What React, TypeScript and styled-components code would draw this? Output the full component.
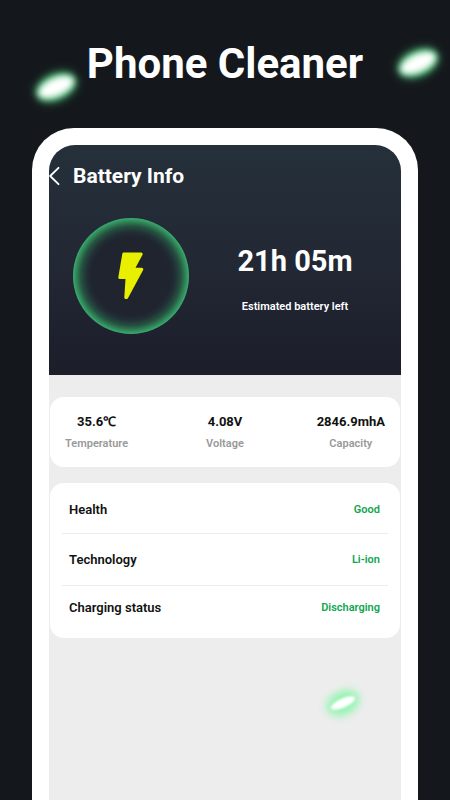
import React from "react";
import styled, { createGlobalStyle } from "styled-components";

const GlobalStyle = createGlobalStyle`
  *, *::before, *::after { box-sizing: border-box; }
  body {
    margin: 0;
    background: #14181c;
    font-family: Roboto, "Liberation Sans", sans-serif;
  }
  h1, h2, p, dl, dd { margin: 0; }
`;

const Page = styled.div`
  position: relative;
  display: flex;
  flex-direction: column;
  min-height: 100vh;
  overflow: hidden;
  background: #14181c;
`;

const PageHeader = styled.header`
  display: flex;
  align-items: center;
  justify-content: center;
  height: 128px;
  color: #fff;
`;

const PageTitle = styled.h1`
  font-size: 42px;
  line-height: 48px;
  font-weight: 700;
`;

const Phone = styled.main`
  flex: 1;
  display: flex;
  margin: 0 32px;
  padding: 17px 17px 0;
  border-radius: 42px 42px 0 0;
  background: #fff;
`;

const Screen = styled.div`
  flex: 1;
  min-width: 0;
  border-radius: 26px 26px 0 0;
  overflow: hidden;
  background: #ededed;
`;

const Hero = styled.section`
  height: 230px;
  padding-top: 18px;
  color: #fff;
  background: linear-gradient(#25303a, #222834 50%, #1c1e2a);
`;

const TopBar = styled.div`
  display: flex;
  align-items: center;
  gap: 12px;
  height: 26px;
`;

const BackButton = styled.button`
  display: flex;
  padding: 0;
  border: 0;
  background: none;
  color: #fff;
`;

const ScreenTitle = styled.h2`
  font-size: 21px;
  line-height: 26px;
  font-weight: 700;
`;

const HeroBody = styled.div`
  display: flex;
  align-items: center;
  padding: 29px 0 0 24px;
`;

const Gauge = styled.div`
  flex: none;
  display: flex;
  align-items: center;
  justify-content: center;
  width: 116px;
  height: 116px;
  border-radius: 50%;
  background: radial-gradient(
    closest-side,
    #20242f 68%,
    #212f36 76%,
    #26513f 86%,
    #2f8558 94%,
    #3bab6f 100%
  );
`;

const Estimate = styled.div`
  flex: 1;
  display: flex;
  flex-direction: column;
  align-items: center;
  gap: 20px;
  padding-top: 5px;
`;

const TimeLeft = styled.p`
  font-size: 29px;
  line-height: 36px;
  font-weight: 700;
`;

const Caption = styled.p`
  font-size: 11px;
  line-height: 16px;
  font-weight: 600;
`;

const Cards = styled.div`
  display: flex;
  flex-direction: column;
  gap: 16px;
  padding: 22px 1px;
`;

const StatsCard = styled.dl`
  display: grid;
  grid-template-columns: 1fr auto 1fr;
  padding: 15px;
  border-radius: 14px;
  background: #fff;
`;

const Stat = styled.div`
  display: flex;
  flex-direction: column-reverse;
  justify-content: flex-end;
  align-items: center;
  gap: 4px;
  justify-self: center;

  &:first-child {
    justify-self: start;
  }

  &:last-child {
    justify-self: end;
  }
`;

const StatLabel = styled.dt`
  font-size: 11px;
  line-height: 16px;
  font-weight: 600;
  color: #999;
`;

const StatValue = styled.dd`
  font-size: 13px;
  line-height: 20px;
  font-weight: 700;
  color: #111;
`;

const DetailsCard = styled.dl`
  padding: 4px 12px 9px;
  border-radius: 14px;
  background: #fff;
`;

const DetailRow = styled.div`
  display: flex;
  align-items: center;
  justify-content: space-between;
  height: 46px;
  padding: 0 8px 0 7px;

  & + & {
    height: 52px;
    border-top: 1px solid #ececec;
  }

  & + &:last-child {
    height: 44px;
  }
`;

const DetailLabel = styled.dt`
  font-size: 13px;
  line-height: 20px;
  font-weight: 600;
  color: #111;
`;

const DetailValue = styled.dd`
  font-size: 11px;
  line-height: 20px;
  font-weight: 600;
  color: #11a650;
`;

const Spark = styled.span<{ $x: string; $y: string; $soft?: boolean }>`
  position: absolute;
  left: ${(p) => p.$x};
  top: ${(p) => p.$y};
  display: grid;
  place-items: center;
  transform: translate(-50%, -50%) rotate(-24deg);

  &::before,
  &::after {
    content: "";
    grid-area: 1 / 1;
    border-radius: 50%;
  }

  &::before {
    width: ${(p) => (p.$soft ? "34px" : "42px")};
    height: ${(p) => (p.$soft ? "23px" : "26px")};
    background: ${(p) => (p.$soft ? "#8ff5ae" : "#48c777")};
    filter: blur(4px);
  }

  &::after {
    width: ${(p) => (p.$soft ? "26px" : "38px")};
    height: ${(p) => (p.$soft ? "9px" : "18px")};
    background: #fff;
    filter: blur(${(p) => (p.$soft ? "1px" : "3px")});
  }
`;

const stats = [
  { label: "Temperature", value: "35.6℃" },
  { label: "Voltage", value: "4.08V" },
  { label: "Capacity", value: "2846.9mhA" },
];

const details = [
  { label: "Health", value: "Good" },
  { label: "Technology", value: "Li-ion" },
  { label: "Charging status", value: "Discharging" },
];

function ChevronLeft() {
  return (
    <svg width="12" height="20" viewBox="0 0 12 20" fill="none" aria-hidden="true">
      <path
        d="M9.5 1.8 L1.2 10 L9.5 18.2"
        stroke="currentColor"
        strokeWidth="1.8"
        strokeLinecap="round"
        strokeLinejoin="round"
      />
    </svg>
  );
}

function Bolt() {
  return (
    <svg width="28" height="48" viewBox="0 0 28 48" aria-hidden="true">
      <path
        d="M6.8 2 H24.2 L16 17.2 H24.8 L9.6 45.5 H8.8 L10.1 25.4 H2.8 Z"
        fill="#e8f000"
        stroke="#e8f000"
        strokeWidth="3"
        strokeLinejoin="round"
      />
    </svg>
  );
}

export default function App() {
  return (
    <Page>
      <GlobalStyle />
      <PageHeader>
        <PageTitle>Phone Cleaner</PageTitle>
      </PageHeader>
      <Phone>
        <Screen>
          <Hero>
            <TopBar>
              <BackButton type="button" aria-label="Back">
                <ChevronLeft />
              </BackButton>
              <ScreenTitle>Battery Info</ScreenTitle>
            </TopBar>
            <HeroBody>
              <Gauge>
                <Bolt />
              </Gauge>
              <Estimate>
                <TimeLeft>21h 05m</TimeLeft>
                <Caption>Estimated battery left</Caption>
              </Estimate>
            </HeroBody>
          </Hero>
          <Cards>
            <StatsCard>
              {stats.map((s) => (
                <Stat key={s.label}>
                  <StatLabel>{s.label}</StatLabel>
                  <StatValue>{s.value}</StatValue>
                </Stat>
              ))}
            </StatsCard>
            <DetailsCard>
              {details.map((d) => (
                <DetailRow key={d.label}>
                  <DetailLabel>{d.label}</DetailLabel>
                  <DetailValue>{d.value}</DetailValue>
                </DetailRow>
              ))}
            </DetailsCard>
          </Cards>
        </Screen>
      </Phone>
      <Spark $x="56px" $y="87px" />
      <Spark $x="calc(100% - 32px)" $y="63px" />
      <Spark $x="calc(100% - 107px)" $y="703px" $soft />
    </Page>
  );
}
